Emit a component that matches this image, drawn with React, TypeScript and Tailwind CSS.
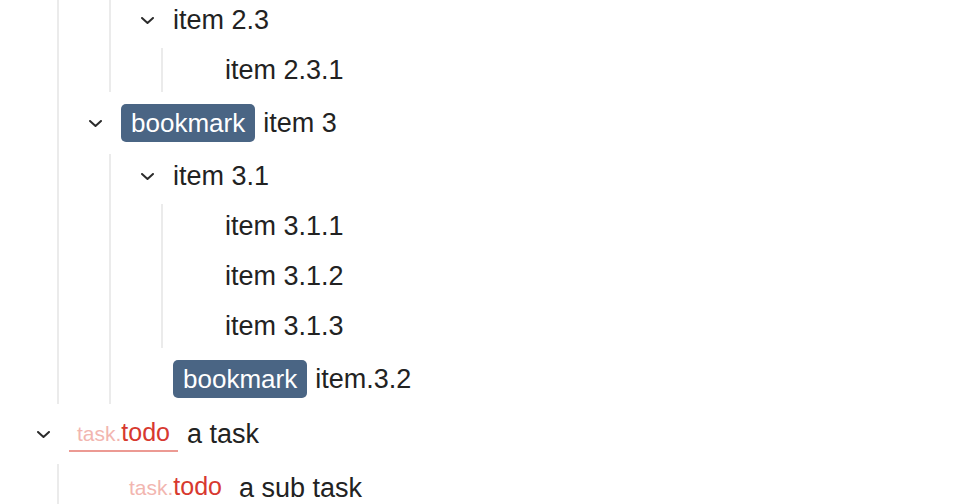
import type { ReactNode } from "react";

function Chevron() {
  return (
    <svg width="13" height="7" viewBox="0 0 13 7" fill="none">
      <polyline
        points="1,1 6.5,6 12,1"
        stroke="#2b2b2b"
        strokeWidth="2"
        strokeLinecap="round"
        strokeLinejoin="round"
      />
    </svg>
  );
}

function Bookmark() {
  return (
    <span className="mr-[8px] h-[38px] rounded-[5px] bg-[#4a6584] px-[10px] text-[26px] leading-[38px] text-white">
      bookmark
    </span>
  );
}

function Task({ underline }: { underline?: boolean }) {
  return (
    <span
      className={
        underline
          ? "mr-[9px] h-[36px] border-b-2 border-[#ec9a93] px-[8px] pt-[2px] pb-[3px] leading-[29px]"
          : "mr-[9px] h-[36px] border-b-2 border-transparent px-[8px] pt-[2px] pb-[3px] leading-[29px]"
      }
    >
      <span className="text-[21px] text-[#f2b6b0]">task.</span>
      <span className="text-[25px] text-[#d7392f]">todo</span>
    </span>
  );
}

function Row({
  open,
  h,
  children,
}: {
  open?: boolean;
  h: "plain" | "badge" | "task";
  children: ReactNode;
}) {
  const height =
    h === "badge" ? "h-[50px]" : h === "task" ? "h-[48px]" : "h-[44px]";
  return (
    <div className={`flex items-center ${height}`}>
      <div className="flex w-[52px] shrink-0 items-center justify-center">
        {open && <Chevron />}
      </div>
      <div className="flex items-center whitespace-nowrap">{children}</div>
    </div>
  );
}

function Children({ children }: { children: ReactNode }) {
  return (
    <div className="ml-[40px] flex flex-col gap-[6px] border-l-2 border-[#ebebeb] pl-[10px]">
      {children}
    </div>
  );
}

function Node({ row, children }: { row: ReactNode; children?: ReactNode }) {
  return (
    <div className="flex flex-col gap-[6px]">
      {row}
      {children && <Children>{children}</Children>}
    </div>
  );
}

export default function App() {
  return (
    <div className="h-[504px] w-[980px] overflow-hidden bg-white font-['Liberation_Sans',Arial,sans-serif] text-[27px] text-[#222]">
      <div className="-mt-[2px] flex flex-col gap-[6px] pl-[17px]">
        <Children>
          <Children>
            <Node
              row={
                <Row open h="plain">
                  item 2.3
                </Row>
              }
            >
              <Row h="plain">item 2.3.1</Row>
            </Node>
          </Children>
          <Node
            row={
              <Row open h="badge">
                <Bookmark />
                item 3
              </Row>
            }
          >
            <Node
              row={
                <Row open h="plain">
                  item 3.1
                </Row>
              }
            >
              <Row h="plain">item 3.1.1</Row>
              <Row h="plain">item 3.1.2</Row>
              <Row h="plain">item 3.1.3</Row>
            </Node>
            <Row h="badge">
              <Bookmark />
              item.3.2
            </Row>
          </Node>
        </Children>
        <Node
          row={
            <Row open h="task">
              <Task underline />a task
            </Row>
          }
        >
          <Row h="task">
            <Task />a sub task
          </Row>
        </Node>
      </div>
    </div>
  );
}
